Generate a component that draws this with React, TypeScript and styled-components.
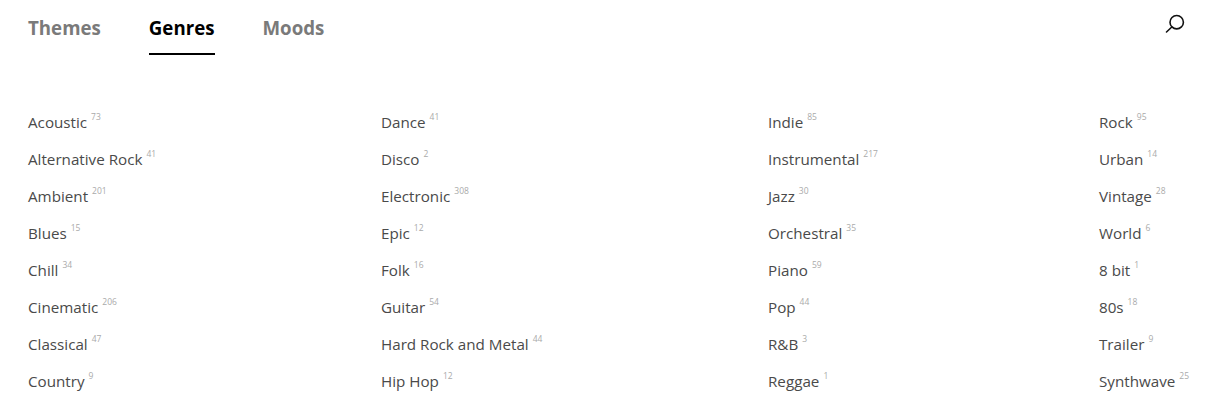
import React from "react";
import styled, { createGlobalStyle } from "styled-components";

const Global = createGlobalStyle`
  html, body { margin: 0; padding: 0; background: #fff; }
  body { font-family: "Open Sans", "Noto Sans", "Liberation Sans", sans-serif; overflow: hidden; }
`;
const Page = styled.div`
  width: 1207px; height: 415px; box-sizing: border-box; padding: 0 19px 0 28px; overflow: hidden;
`;
const Header = styled.header`
  display: flex; justify-content: space-between; align-items: flex-start; height: 111px;
`;
const Tabs = styled.nav`
  display: flex; gap: 48px;
`;
const Tab = styled.a<{ $active?: boolean }>`
  display: block; height: 55px; box-sizing: border-box; padding-top: 14px;
  font-size: 18.7px; line-height: 27px; font-weight: 700;
  color: ${p => (p.$active ? "#000" : "#7a7a7a")};
  border-bottom: 2px solid ${p => (p.$active ? "#000" : "transparent")};
`;
const SearchButton = styled.button`
  border: 0; background: none; padding: 0; margin: 13px 2px 0 0; width: 22px; height: 22px; display: block;
`;
const Columns = styled.div`
  display: grid; grid-template-columns: 353px 387px 331px 1fr;
`;
const Column = styled.ul`
  list-style: none; margin: 0; padding: 0; display: flex; flex-direction: column; gap: 15px;
`;
const Item = styled.li`
  display: flex; align-items: flex-start; height: 22px; font-size: 15.2px; line-height: 22px; color: #4a4a4a; white-space: nowrap;
`;
const Count = styled.sup`
  font-size: 8.5px; line-height: 10px; color: #aaa; margin-left: 4px; position: relative; top: 1px; vertical-align: baseline;
`;

const columns: [string, number][][] = [
  [["Acoustic",73],["Alternative Rock",41],["Ambient",201],["Blues",15],["Chill",34],["Cinematic",206],["Classical",47],["Country",9]],
  [["Dance",41],["Disco",2],["Electronic",308],["Epic",12],["Folk",16],["Guitar",54],["Hard Rock and Metal",44],["Hip Hop",12]],
  [["Indie",85],["Instrumental",217],["Jazz",30],["Orchestral",35],["Piano",59],["Pop",44],["R&B",3],["Reggae",1]],
  [["Rock",95],["Urban",14],["Vintage",28],["World",6],["8 bit",1],["80s",18],["Trailer",9],["Synthwave",25]],
];

export default function App() {
  return (
    <Page>
      <Global />
      <Header>
        <Tabs>
          <Tab>Themes</Tab>
          <Tab $active>Genres</Tab>
          <Tab>Moods</Tab>
        </Tabs>
        <SearchButton aria-label="Search">
          <svg width="22" height="22" viewBox="0 0 22 22" fill="none" stroke="#111" strokeWidth="1.6">
            <circle cx="12.7" cy="9.2" r="6.7" />
            <path d="M7.8 14 L2.5 19" strokeLinecap="round" />
          </svg>
        </SearchButton>
      </Header>
      <Columns>
        {columns.map((c, i) => (
          <Column key={i}>
            {c.map(([n, v]) => (
              <Item key={n}>{n}<Count>{v}</Count></Item>
            ))}
          </Column>
        ))}
      </Columns>
    </Page>
  );
}
